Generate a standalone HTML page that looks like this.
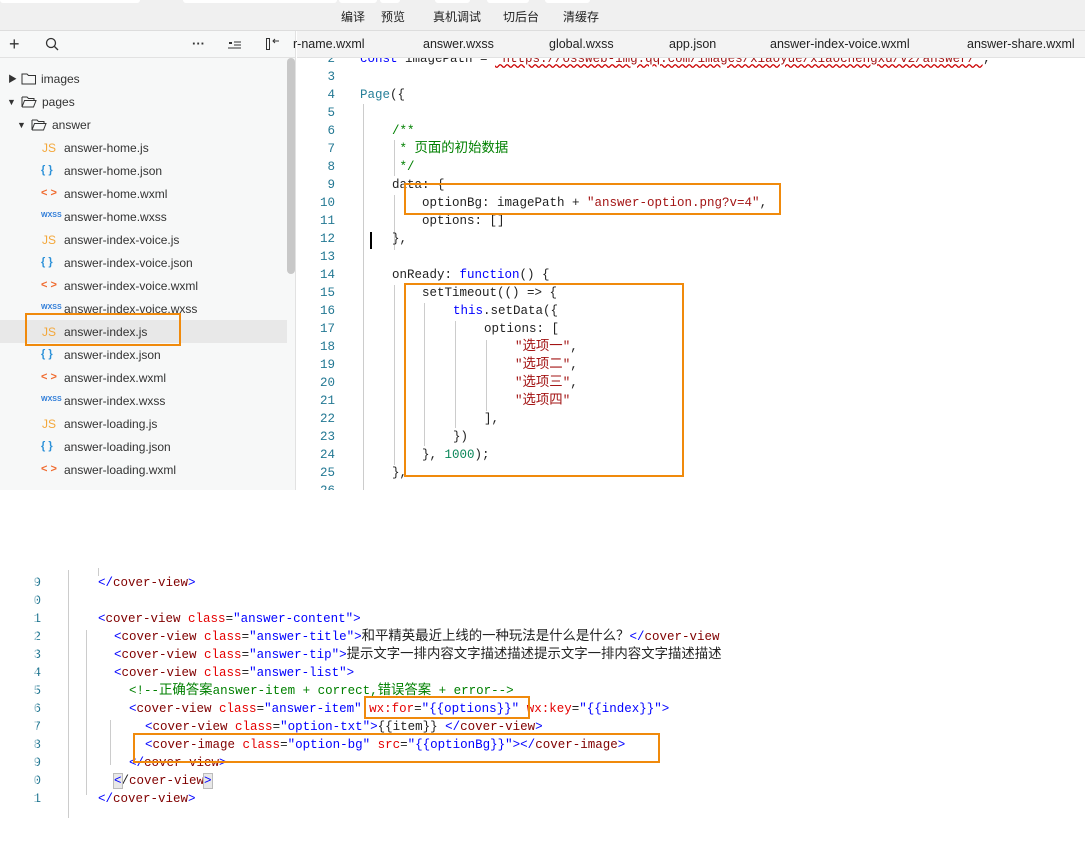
<!DOCTYPE html>
<html><head><meta charset="utf-8"><style>
*{margin:0;padding:0;box-sizing:border-box}
body{width:1085px;height:847px;background:#fff;position:relative;overflow:hidden;font-family:"Liberation Sans","Noto Sans CJK SC",sans-serif}
.a{position:absolute;white-space:pre}
.top{position:absolute;left:0;top:0;width:1085px;height:31px;background:#f0f0f0;border-bottom:1px solid #ddd}
.pill{position:absolute;top:0;height:3px;background:#fff;border-radius:0 0 3px 3px}
.tb{font-size:12px;color:#222;top:8px}
.side{position:absolute;left:0;top:31px;width:296px;height:459px;background:#f7f8f8;border-right:1px solid #e2e2e2}
.sh{position:absolute;left:0;top:31px;width:296px;height:27px;border-bottom:1px solid #e2e2e2}
.tabs{position:absolute;left:297px;top:31px;width:788px;height:27px;background:#f3f3f3;border-bottom:1px solid #e2e2e2}
.tab{font-size:12.5px;color:#222;top:37px}
.f{font-size:12px;color:#333;line-height:15px}
.ic{font-size:11px;font-weight:bold}
.js{color:#f3a73a;font-size:12px}
.jn{color:#2a90d8}
.xm{color:#f06a2e}
.ws{color:#2a7ad8;font-size:7px;font-weight:bold}
.c{font-family:"Liberation Mono","Noto Sans CJK SC",monospace;font-size:12.5px;color:#222;line-height:16px;height:16px}
.c .z{font-size:13.4px;line-height:16px}
.n{font-family:"Liberation Mono",monospace;font-size:12.5px;color:#237893;text-align:right;width:30px;line-height:16px}
.k{color:#0000ff}.s{color:#a31515}.g{color:#008000}.t{color:#800000}.r{color:#e50000}.b{color:#0451a5}.num{color:#098658}
.ob{position:absolute;border:2px solid #f08a0c}
.vl{position:absolute;width:1px;background:#ccc}
</style></head><body>
<div class="top">
<div class="pill" style="left:0;width:140px"></div>
<div class="pill" style="left:183px;width:154px"></div>
<div class="pill" style="left:339px;width:38px"></div>
<div class="pill" style="left:380px;width:20px"></div>
<div class="pill" style="left:435px;width:35px"></div>
<div class="pill" style="left:487px;width:42px"></div>
<div class="pill" style="left:545px;width:45px"></div>
</div>
<div class="a tb" style="left:341px">编译</div>
<div class="a tb" style="left:381px">预览</div>
<div class="a tb" style="left:433px">真机调试</div>
<div class="a tb" style="left:503px">切后台</div>
<div class="a tb" style="left:563px">清缓存</div>

<div class="side"></div>
<div style="position:absolute;left:287px;top:58px;width:8px;height:216px;background:#c8c8c8;border-radius:4px"></div>
<div class="sh"></div>
<div class="a" style="left:9px;top:34px;font-size:18px;color:#333">+</div>
<svg class="a" style="left:45px;top:37px" width="14" height="14"><circle cx="6" cy="6" r="4.5" stroke="#333" stroke-width="1.3" fill="none"/><line x1="9.5" y1="9.5" x2="13" y2="13" stroke="#333" stroke-width="1.3"/></svg>
<div class="a" style="left:192px;top:36px;font-size:13px;color:#333;font-weight:bold">···</div>
<svg class="a" style="left:228px;top:39px" width="14" height="10"><rect x="1" y="3" width="3" height="2" fill="#333"/><line x1="6" y1="3" x2="13" y2="3" stroke="#333"/><line x1="6" y1="6" x2="13" y2="6" stroke="#333"/><line x1="0" y1="9" x2="13" y2="9" stroke="#333"/></svg>
<svg class="a" style="left:265px;top:37px" width="16" height="14"><rect x="1.5" y="1.5" width="3" height="11" fill="none" stroke="#333"/><path d="M8 4 L14 4 M10 2 L8 4 L10 6" stroke="#333" fill="none"/></svg>

<div class="tabs"></div>
<div class="a tab" style="left:293px">r-name.wxml</div>
<div class="a tab" style="left:423px">answer.wxss</div>
<div class="a tab" style="left:549px">global.wxss</div>
<div class="a tab" style="left:669px">app.json</div>
<div class="a tab" style="left:770px">answer-index-voice.wxml</div>
<div class="a tab" style="left:967px">answer-share.wxml</div>

<!-- tree -->
<div style="position:absolute;left:0;top:320px;width:287px;height:23px;background:#e8e8e8"></div>
<div class="a f" style="left:8px;top:72px;font-size:9px">▶</div>
<svg class="a" style="left:21px;top:72px" width="16" height="13"><path d="M1 2 H6 L7.5 3.5 H14.5 V12 H1 Z" fill="none" stroke="#333"/></svg>
<div class="a f" style="left:41px;top:72px">images</div>
<div class="a f" style="left:7px;top:95px;font-size:9px">▼</div>
<svg class="a" style="left:21px;top:95px" width="16" height="13"><path d="M1 2 H6 L7.5 3.5 H13 V5.5 M1 12 V2 M1 12 H12.5 L15 5.5 H3.5 L1 12" fill="none" stroke="#333"/></svg>
<div class="a f" style="left:42px;top:95px">pages</div>
<div class="a f" style="left:17px;top:118px;font-size:9px">▼</div>
<svg class="a" style="left:31px;top:118px" width="16" height="13"><path d="M1 2 H6 L7.5 3.5 H13 V5.5 M1 12 V2 M1 12 H12.5 L15 5.5 H3.5 L1 12" fill="none" stroke="#333"/></svg>
<div class="a f" style="left:52px;top:118px">answer</div>

<div class="a js" style="left:42px;top:141px">JS</div><div class="a f" style="left:64px;top:141px">answer-home.js</div>
<div class="a ic jn" style="left:41px;top:164px">{ }</div><div class="a f" style="left:64px;top:164px">answer-home.json</div>
<div class="a ic xm" style="left:41px;top:187px">&lt; &gt;</div><div class="a f" style="left:64px;top:187px">answer-home.wxml</div>
<div class="a ws" style="left:41px;top:212px">WXSS</div><div class="a f" style="left:64px;top:210px">answer-home.wxss</div>
<div class="a js" style="left:42px;top:233px">JS</div><div class="a f" style="left:64px;top:233px">answer-index-voice.js</div>
<div class="a ic jn" style="left:41px;top:256px">{ }</div><div class="a f" style="left:64px;top:256px">answer-index-voice.json</div>
<div class="a ic xm" style="left:41px;top:279px">&lt; &gt;</div><div class="a f" style="left:64px;top:279px">answer-index-voice.wxml</div>
<div class="a ws" style="left:41px;top:304px">WXSS</div><div class="a f" style="left:64px;top:302px">answer-index-voice.wxss</div>
<div class="a js" style="left:42px;top:325px">JS</div><div class="a f" style="left:64px;top:325px">answer-index.js</div>
<div class="a ic jn" style="left:41px;top:348px">{ }</div><div class="a f" style="left:64px;top:348px">answer-index.json</div>
<div class="a ic xm" style="left:41px;top:371px">&lt; &gt;</div><div class="a f" style="left:64px;top:371px">answer-index.wxml</div>
<div class="a ws" style="left:41px;top:396px">WXSS</div><div class="a f" style="left:64px;top:394px">answer-index.wxss</div>
<div class="a js" style="left:42px;top:417px">JS</div><div class="a f" style="left:64px;top:417px">answer-loading.js</div>
<div class="a ic jn" style="left:41px;top:440px">{ }</div><div class="a f" style="left:64px;top:440px">answer-loading.json</div>
<div class="a ic xm" style="left:41px;top:463px">&lt; &gt;</div><div class="a f" style="left:64px;top:463px">answer-loading.wxml</div>
<div class="ob" style="left:25px;top:313px;width:156px;height:33px"></div>

<!-- editor -->
<div style="position:absolute;left:297px;top:58px;width:788px;height:432px;overflow:hidden">
<div style="position:relative;left:-297px;top:-58px">
<div class="vl" style="left:363px;top:104px;height:400px"></div>
<div class="vl" style="left:394px;top:140px;height:36px"></div>
<div class="vl" style="left:394px;top:195px;height:55px"></div>
<div class="vl" style="left:394px;top:285px;height:180px"></div>
<div class="vl" style="left:424px;top:303px;height:143px"></div>
<div class="vl" style="left:455px;top:321px;height:107px"></div>
<div class="vl" style="left:486px;top:340px;height:71px"></div>
<div style="position:absolute;left:370px;top:232px;width:2px;height:17px;background:#000"></div>
<div class="a n" style="left:305px;top:51px">2</div><div class="a c" style="left:360px;top:51px"><span class="k">const</span> imagePath = <span class="s" style="text-decoration:underline wavy #c00">'https://ossweb-img.qq.com/images/xiaoyue/xiaochengxu/v2/answer/'</span>;</div>
<div class="a n" style="left:305px;top:69px">3</div>
<div class="a n" style="left:305px;top:87px">4</div><div class="a c" style="left:360px;top:87px;color:#267f99">Page<span style="color:#222">({</span></div>
<div class="a n" style="left:305px;top:105px">5</div>
<div class="a n" style="left:305px;top:123px">6</div><div class="a c g" style="left:392px;top:123px">/**</div>
<div class="a n" style="left:305px;top:141px">7</div><div class="a c g" style="left:392px;top:141px"> * <span class="z">页面的初始数据</span></div>
<div class="a n" style="left:305px;top:159px">8</div><div class="a c g" style="left:392px;top:159px"> */</div>
<div class="a n" style="left:305px;top:177px">9</div><div class="a c" style="left:392px;top:177px">data: {</div>
<div class="a n" style="left:305px;top:195px">10</div><div class="a c" style="left:422px;top:195px">optionBg: imagePath + <span class="s">"answer-option.png?v=4"</span>,</div>
<div class="a n" style="left:305px;top:213px">11</div><div class="a c" style="left:422px;top:213px">options: []</div>
<div class="a n" style="left:305px;top:231px">12</div><div class="a c" style="left:392px;top:231px">},</div>
<div class="a n" style="left:305px;top:249px">13</div>
<div class="a n" style="left:305px;top:267px">14</div><div class="a c" style="left:392px;top:267px">onReady: <span class="k">function</span>() {</div>
<div class="a n" style="left:305px;top:285px">15</div><div class="a c" style="left:422px;top:285px">setTimeout(() =&gt; {</div>
<div class="a n" style="left:305px;top:303px">16</div><div class="a c" style="left:453px;top:303px"><span class="k">this</span>.setData({</div>
<div class="a n" style="left:305px;top:321px">17</div><div class="a c" style="left:484px;top:321px">options: [</div>
<div class="a n" style="left:305px;top:339px">18</div><div class="a c" style="left:515px;top:339px"><span class="s">"<span class="z">选项一</span>"</span>,</div>
<div class="a n" style="left:305px;top:357px">19</div><div class="a c" style="left:515px;top:357px"><span class="s">"<span class="z">选项二</span>"</span>,</div>
<div class="a n" style="left:305px;top:375px">20</div><div class="a c" style="left:515px;top:375px"><span class="s">"<span class="z">选项三</span>"</span>,</div>
<div class="a n" style="left:305px;top:393px">21</div><div class="a c" style="left:515px;top:393px"><span class="s">"<span class="z">选项四</span>"</span></div>
<div class="a n" style="left:305px;top:411px">22</div><div class="a c" style="left:484px;top:411px">],</div>
<div class="a n" style="left:305px;top:429px">23</div><div class="a c" style="left:453px;top:429px">})</div>
<div class="a n" style="left:305px;top:447px">24</div><div class="a c" style="left:422px;top:447px">}, <span class="num">1000</span>);</div>
<div class="a n" style="left:305px;top:465px">25</div><div class="a c" style="left:392px;top:465px">},</div>
<div class="a n" style="left:305px;top:483px">26</div>
</div></div>
<div class="ob" style="left:404px;top:183px;width:377px;height:32px"></div>
<div class="ob" style="left:404px;top:283px;width:280px;height:194px"></div>

<!-- bottom snippet -->
<div class="vl" style="left:68px;top:570px;height:248px"></div>
<div class="vl" style="left:98px;top:568px;height:8px"></div>
<div class="vl" style="left:86px;top:630px;height:165px"></div>
<div class="vl" style="left:110px;top:720px;height:45px"></div>
<div class="a n" style="left:8px;top:575px;overflow:hidden;width:33px">9</div>
<div class="a n" style="left:8px;top:593px;width:33px">0</div>
<div class="a n" style="left:8px;top:611px;width:33px">1</div>
<div class="a n" style="left:8px;top:629px;width:33px">2</div>
<div class="a n" style="left:8px;top:647px;width:33px">3</div>
<div class="a n" style="left:8px;top:665px;width:33px">4</div>
<div class="a n" style="left:8px;top:683px;width:33px">5</div>
<div class="a n" style="left:8px;top:701px;width:33px">6</div>
<div class="a n" style="left:8px;top:719px;width:33px">7</div>
<div class="a n" style="left:8px;top:737px;width:33px">8</div>
<div class="a n" style="left:8px;top:755px;width:33px">9</div>
<div class="a n" style="left:8px;top:773px;width:33px">0</div>
<div class="a n" style="left:8px;top:791px;width:33px">1</div>
<div style="position:absolute;left:0;top:560px;width:37px;height:260px;background:rgba(255,255,255,.55)"></div>

<div class="a c" style="left:98px;top:575px"><span class="k">&lt;/</span><span class="t">cover-view</span><span class="k">&gt;</span></div>
<div class="a c" style="left:98px;top:611px"><span class="k">&lt;</span><span class="t">cover-view</span> <span class="r">class</span>=<span class="k">"answer-content"</span><span class="k">&gt;</span></div>
<div class="a c" style="left:114px;top:629px"><span class="k">&lt;</span><span class="t">cover-view</span> <span class="r">class</span>=<span class="k">"answer-title"</span><span class="k">&gt;</span><span class="z">和平精英最近上线的一种玩法是什么是什么？</span><span class="k">&lt;/</span><span class="t">cover-view</span></div>
<div class="a c" style="left:114px;top:647px"><span class="k">&lt;</span><span class="t">cover-view</span> <span class="r">class</span>=<span class="k">"answer-tip"</span><span class="k">&gt;</span><span class="z">提示文字一排内容文字描述描述提示文字一排内容文字描述描述</span></div>
<div class="a c" style="left:114px;top:665px"><span class="k">&lt;</span><span class="t">cover-view</span> <span class="r">class</span>=<span class="k">"answer-list"</span><span class="k">&gt;</span></div>
<div class="a c g" style="left:129px;top:683px">&lt;!--<span class="z">正确答案</span>answer-item + correct,<span class="z">错误答案</span> + error--&gt;</div>
<div class="a c" style="left:129px;top:701px"><span class="k">&lt;</span><span class="t">cover-view</span> <span class="r">class</span>=<span class="k">"answer-item"</span> <span class="r">wx:for</span>=<span class="k">"{{options}}"</span> <span class="r">wx:key</span>=<span class="k">"{{index}}"</span><span class="k">&gt;</span></div>
<div class="a c" style="left:145px;top:719px"><span class="k">&lt;</span><span class="t">cover-view</span> <span class="r">class</span>=<span class="k">"option-txt"</span><span class="k">&gt;</span>{{item}} <span class="k">&lt;/</span><span class="t">cover-view</span><span class="k">&gt;</span></div>
<div class="a c" style="left:145px;top:737px"><span class="k">&lt;</span><span class="t">cover-image</span> <span class="r">class</span>=<span class="k">"option-bg"</span> <span class="r">src</span>=<span class="k">"{{optionBg}}"</span><span class="k">&gt;&lt;/</span><span class="t">cover-image</span><span class="k">&gt;</span></div>
<div class="a c" style="left:129px;top:755px"><span class="k">&lt;/</span><span class="t">cover-view</span><span class="k">&gt;</span></div>
<div class="a c" style="left:114px;top:773px"><span style="background:#e8e8e8;outline:1px solid #bbb" class="k">&lt;</span>/<span class="t">cover-view</span><span style="background:#e8e8e8;outline:1px solid #bbb" class="k">&gt;</span></div>
<div class="a c" style="left:98px;top:791px"><span class="k">&lt;/</span><span class="t">cover-view</span><span class="k">&gt;</span></div>
<div class="ob" style="left:364px;top:696px;width:166px;height:23px"></div>
<div class="ob" style="left:133px;top:733px;width:527px;height:30px"></div>
</body></html>
